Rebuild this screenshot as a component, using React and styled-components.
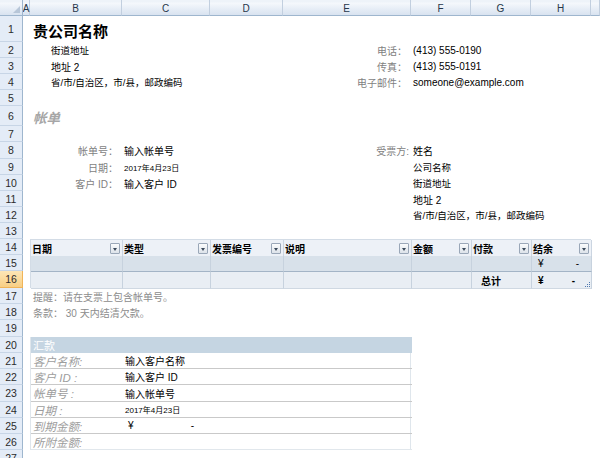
import React from 'react';
import styled, { createGlobalStyle } from 'styled-components';

const GlobalStyle = createGlobalStyle`
  html, body {
    margin: 0;
    padding: 0;
    background: #fff;
    overflow: hidden;
  }
  body {
    font-family: "Liberation Sans", "Noto Sans CJK SC", sans-serif;
    font-size: 10px;
    color: #000;
  }
`;

const COLS = ['A', 'B', 'C', 'D', 'E', 'F', 'G', 'H', 'I'];
const COL_WIDTHS = [7, 92, 88, 73, 128, 60, 60, 60, 9];
const ROW_HEIGHTS = [26, 16, 16, 16, 16, 20, 16, 17, 16, 16, 16, 16, 16, 16, 16, 17, 16, 16, 17, 16, 16, 16, 17, 16, 16, 16, 16];
const SELECTED_ROW = 16;

const colIndex = letter => COLS.indexOf(letter) + 2;

const Sheet = styled.div`
  display: grid;
  grid-template-columns: 23px ${COL_WIDTHS.map(w => w + 'px').join(' ')};
  grid-template-rows: 16px ${ROW_HEIGHTS.map(h => h + 'px').join(' ')};
  width: 600px;
  height: 458px;
  overflow: hidden;
  background: #fff;
`;

const ColHead = styled.div`
  grid-row: 1;
  box-sizing: border-box;
  display: flex;
  align-items: center;
  justify-content: center;
  padding-top: 2px;
  background: linear-gradient(#eef3f9 0, #eef3f9 2px, #f5f8fc 3px, #e6edf6 60%, #d9e3f0 100%);
  border-right: 1px solid #c2cfdf;
  border-bottom: 1px solid #9eb6ce;
  font-family: "Liberation Sans", sans-serif;
  font-size: 10px;
  color: #27374a;
`;

const Corner = styled(ColHead)`
  grid-column: 1;
  position: relative;
  border-right-color: #9eb6ce;
  &::after {
    content: '';
    position: absolute;
    right: 2px;
    bottom: 2px;
    border-style: solid;
    border-width: 0 0 7px 7px;
    border-color: transparent transparent #b7c6d8 transparent;
  }
`;

const RowHead = styled.div`
  grid-column: 1;
  grid-row: ${p => p.$row + 1};
  box-sizing: border-box;
  display: flex;
  align-items: center;
  justify-content: center;
  background: ${p => (p.$selected ? 'linear-gradient(#fde6b6, #f8cf85)' : '#e4ecf7')};
  border-bottom: 1px solid ${p => (p.$selected ? '#f0b458' : '#c7d5e6')};
  border-right: 1px solid ${p => (p.$selected ? '#f0b458' : '#9eb6ce')};
  font-family: "Liberation Sans", sans-serif;
  font-size: 10.5px;
  color: #2b2b2b;
`;

const Cell = styled.div`
  grid-column: ${p => colIndex(p.$col)} / span ${p => p.$span || 1};
  grid-row: ${p => p.$row + 1};
  display: flex;
  align-items: center;
  justify-content: ${p => (p.$right ? 'flex-end' : 'flex-start')};
  padding: 0 ${p => p.$padR ?? 3}px 0 ${p => p.$padL ?? 2}px;
  white-space: nowrap;
  font-size: ${p => p.$size || 10}px;
  color: ${p => p.$color || '#000'};
`;

const CompanyName = styled(Cell)`
  font-size: 15px;
  font-weight: bold;
  padding-top: 3px;
  padding-left: 3px;
`;

const SectionTitle = styled(Cell)`
  font-size: 13.5px;
  font-weight: bold;
  font-style: italic;
  color: #a6a6a6;
  padding-left: 3px;
  padding-top: 2px;
`;

const Label = styled(Cell)`
  color: #7f7f7f;
`;

const Note = styled(Cell)`
  color: #8c8c8c;
  padding-left: 3px;
`;

const Money = styled.span`
  display: inline-flex;
  width: ${p => p.$width}px;
  justify-content: space-between;
  font-weight: ${p => (p.$bold ? 'bold' : 'normal')};
`;

const Table = styled.div`
  grid-column: 3 / span 7;
  grid-row: 15 / span 3;
  position: relative;
  display: grid;
  grid-template-columns: 92px 88px 73px 128px 60px 60px 60px;
  grid-template-rows: 16px 16px 17px;
  border-top: 1px solid #d3dce6;
  border-left: 1px solid #d3dce6;
  box-sizing: border-box;
`;

const HeadCell = styled.div`
  display: flex;
  align-items: center;
  justify-content: space-between;
  padding: 0 2px 0 1px;
  background: #edf1f7;
  border-right: 1px solid #cbd5e1;
  font-weight: bold;
  font-size: 10px;
`;

const FilterButton = styled.span`
  position: relative;
  box-sizing: border-box;
  width: 10px;
  height: 11px;
  border: 1px solid #9aa7b8;
  border-radius: 1px;
  background: linear-gradient(#fbfcfd, #dde3ea);
  &::after {
    content: '';
    position: absolute;
    left: 2px;
    top: 4px;
    border-style: solid;
    border-width: 3px 2.5px 0 2.5px;
    border-color: #3c4a5c transparent transparent transparent;
  }
`;

const BodyCell = styled.div`
  display: flex;
  align-items: center;
  padding-left: ${p => p.$padL ?? 2}px;
  background: ${p => (p.$band ? '#d8e1ea' : '#e9eef4')};
  border-right: 1px solid #c7d2de;
  border-bottom: 1px solid ${p => (p.$band ? '#a3b4c6' : '#cfd8e2')};
  font-weight: ${p => (p.$bold ? 'bold' : 'normal')};
`;

const ResizeGrip = styled.svg`
  position: absolute;
  right: 1px;
  bottom: 1px;
`;

const Remit = styled.div`
  grid-column: 3 / span 4;
  grid-row: 21 / span 7;
  display: grid;
  grid-template-columns: 92px 289px;
  grid-template-rows: 16px 16px 16px 17px 16px 16px 16px;
  border-left: 1px solid #dfe6ec;
  border-right: 1px solid #dfe6ec;
  box-sizing: border-box;
`;

const RemitTitle = styled.div`
  grid-column: 1 / span 2;
  display: flex;
  align-items: center;
  padding-left: 2px;
  background: #c5d5e2;
  color: #fff;
  font-size: 11px;
`;

const RemitLabel = styled.div`
  display: flex;
  align-items: center;
  padding-left: 2px;
  font-size: 11.5px;
  font-style: italic;
  color: #9d9d9d;
  border-bottom: 1px solid ${p => (p.$last ? '#e1e7ec' : '#c9c9c9')};
`;

const RemitValue = styled.div`
  display: flex;
  align-items: center;
  padding-left: ${p => p.$padL ?? 2}px;
  font-size: ${p => p.$size || 10}px;
  border-bottom: 1px solid ${p => (p.$last ? '#e1e7ec' : '#c9c9c9')};
`;

const tableHeads = ['日期', '类型', '发票编号', '说明', '金额', '付款', '结余'];

const remitRows = [
  ['客户名称:', '输入客户名称'],
  ['客户 ID :', '输入客户 ID'],
  ['帐单号 :', '输入帐单号'],
  ['日期 :', '2017年4月23日', 8],
  ['到期金额:', 'money'],
  ['所附金额:', ''],
];

export default function App() {
  return (
    <>
      <GlobalStyle />
      <Sheet>
        <Corner />
        {COLS.map(c => (
          <ColHead key={c} style={{ gridColumn: colIndex(c) }}>{c === 'I' ? '' : c}</ColHead>
        ))}
        {ROW_HEIGHTS.map((h, i) => (
          <RowHead key={i} $row={i + 1} $selected={i + 1 === SELECTED_ROW}>{i + 1}</RowHead>
        ))}

        <CompanyName $col="B" $row={1} $span={4}>贵公司名称</CompanyName>
        <Cell $col="B" $row={2} $span={3} $padL={21} $size={9.5}>街道地址</Cell>
        <Cell $col="B" $row={3} $span={3} $padL={21}>地址 2</Cell>
        <Cell $col="B" $row={4} $span={3} $padL={21} $size={9.5}>省/市/自治区，市/县，邮政编码</Cell>

        <Label $col="E" $row={2} $right $padR={4}>电话：</Label>
        <Label $col="E" $row={3} $right $padR={4}>传真：</Label>
        <Label $col="E" $row={4} $right $padR={4}>电子邮件：</Label>
        <Cell $col="F" $row={2} $span={3}>(413) 555-0190</Cell>
        <Cell $col="F" $row={3} $span={3}>(413) 555-0191</Cell>
        <Cell $col="F" $row={4} $span={3}>someone@example.com</Cell>

        <SectionTitle $col="B" $row={6} $span={2}>帐单</SectionTitle>

        <Label $col="B" $row={8} $right $padR={4}>帐单号：</Label>
        <Label $col="B" $row={9} $right $padR={4}>日期：</Label>
        <Label $col="B" $row={10} $right $padR={4}>客户 ID：</Label>
        <Cell $col="C" $row={8} $span={2}>输入帐单号</Cell>
        <Cell $col="C" $row={9} $span={2} $size={8}>2017年4月23日</Cell>
        <Cell $col="C" $row={10} $span={2}>输入客户 ID</Cell>

        <Label $col="E" $row={8} $right $padR={2}>受票方:</Label>
        <Cell $col="F" $row={8} $span={3}>姓名</Cell>
        <Cell $col="F" $row={9} $span={3} $size={9.5}>公司名称</Cell>
        <Cell $col="F" $row={10} $span={3} $size={9.5}>街道地址</Cell>
        <Cell $col="F" $row={11} $span={3}>地址 2</Cell>
        <Cell $col="F" $row={12} $span={4} $size={9.5}>省/市/自治区，市/县，邮政编码</Cell>

        <Table>
          {tableHeads.map(h => (
            <HeadCell key={h}>{h}<FilterButton /></HeadCell>
          ))}
          {tableHeads.map((h, i) =>
            i === 6 ? (
              <BodyCell key={'b' + h} $band $padL={6}><Money $width={41}><span>¥</span><span>-</span></Money></BodyCell>
            ) : (
              <BodyCell key={'b' + h} $band />
            )
          )}
          {tableHeads.map((h, i) => {
            if (i === 5) return <BodyCell key={'t' + h} $bold $padL={9}>总计</BodyCell>;
            if (i === 6) return <BodyCell key={'t' + h} $bold $padL={6}><Money $width={37} $bold><span>¥</span><span>-</span></Money></BodyCell>;
            return <BodyCell key={'t' + h} />;
          })}
          <ResizeGrip width="5" height="5" viewBox="0 0 5 5">
            <rect x="4" y="0" width="1" height="1" fill="#4f79b0" />
            <rect x="2" y="2" width="1" height="1" fill="#4f79b0" />
            <rect x="4" y="2" width="1" height="1" fill="#4f79b0" />
            <rect x="0" y="4" width="1" height="1" fill="#4f79b0" />
            <rect x="2" y="4" width="1" height="1" fill="#4f79b0" />
            <rect x="4" y="4" width="1" height="1" fill="#4f79b0" />
          </ResizeGrip>
        </Table>

        <Note $col="B" $row={17} $span={4}>提醒：请在支票上包含帐单号。</Note>
        <Note $col="B" $row={18} $span={4}>条款： 30 天内结清欠款。</Note>

        <Remit>
          <RemitTitle>汇款</RemitTitle>
          {remitRows.map(([label, value, size], i) => {
            const last = i === remitRows.length - 1;
            return (
              <React.Fragment key={label}>
                <RemitLabel $last={last}>{label}</RemitLabel>
                {value === 'money' ? (
                  <RemitValue $last={last} $padL={5}><Money $width={66}><span>¥</span><span>-</span></Money></RemitValue>
                ) : (
                  <RemitValue $last={last} $size={size}>{value}</RemitValue>
                )}
              </React.Fragment>
            );
          })}
        </Remit>
      </Sheet>
    </>
  );
}
